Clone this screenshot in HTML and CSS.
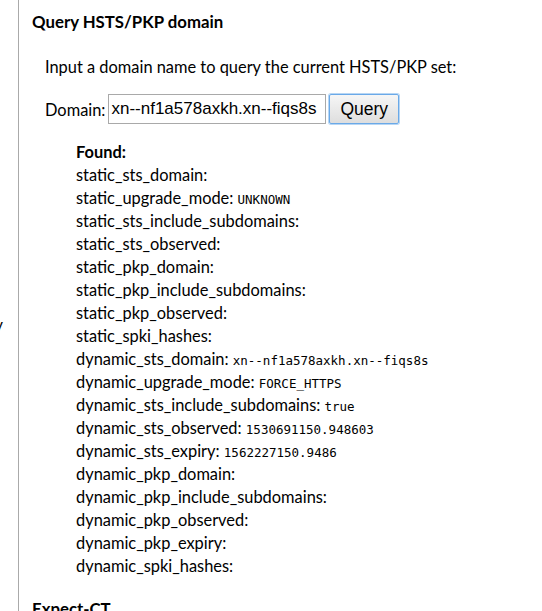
FILE: index.html
```html
<!DOCTYPE html>
<html lang="en">
<head>
	<title>HSTS</title>
	<link rel="stylesheet" href="styles.css">
</head>

<body>
	<div id="page">
		<div id="sidebar">
			<div class="nav-item">Proxy</div>
		</div>

		<div id="content">
			<h2>Query HSTS/PKP domain</h2>
			<div class="section">
				<p>Input a domain name to query the current HSTS/PKP set:</p>
				<form id="query-form">
					<label for="domain">Domain:</label>
					<input id="domain" type="text" value="xn--nf1a578axkh.xn--fiqs8s">
					<button type="submit">Query</button>
				</form>

				<div id="query-output">
					<div class="found">Found:</div>
					<div>static_sts_domain: </div>
					<div>static_upgrade_mode: <tt>UNKNOWN</tt></div>
					<div>static_sts_include_subdomains: </div>
					<div>static_sts_observed: </div>
					<div>static_pkp_domain: </div>
					<div>static_pkp_include_subdomains: </div>
					<div>static_pkp_observed: </div>
					<div>static_spki_hashes: </div>
					<div>dynamic_sts_domain: <tt>xn--nf1a578axkh.xn--fiqs8s</tt></div>
					<div>dynamic_upgrade_mode: <tt>FORCE_HTTPS</tt></div>
					<div>dynamic_sts_include_subdomains: <tt>true</tt></div>
					<div>dynamic_sts_observed: <tt>1530691150.948603</tt></div>
					<div>dynamic_sts_expiry: <tt>1562227150.9486</tt></div>
					<div>dynamic_pkp_domain: </div>
					<div>dynamic_pkp_include_subdomains: </div>
					<div>dynamic_pkp_observed: </div>
					<div>dynamic_pkp_expiry: </div>
					<div>dynamic_spki_hashes: </div>
				</div>
			</div>

			<h2>Expect-CT</h2>
		</div>
	</div>
</body>
</html>
```

FILE: styles.css
```css
body {
	margin: 0;
	padding: 0;
	font-family: 'Lato', 'Noto Sans', sans-serif;
	font-size: 16.4px;
	color: #000;
	background: #fff;
}

#page {
	display: flex;
	min-height: 611px;
}

#sidebar {
	width: 19px;
	flex-shrink: 0;
	border-right: 1px solid #aaa;
	overflow: hidden;
	direction: rtl;
	padding-top: 313px;
	box-sizing: border-box;
}

.nav-item {
	white-space: nowrap;
	padding-right: 15px;
	line-height: 23px;
}

#content {
	padding-left: 13px;
	padding-top: 12px;
}

h2 {
	margin: 0;
	font-size: 16.8px;
	font-weight: bold;
	line-height: 20px;
}

.section {
	padding-left: 13px;
}

.section p {
	margin: 23px 0 0 0;
	line-height: 24px;
}

#query-form {
	display: flex;
	align-items: center;
	margin-top: 15px;
}

label {
	margin-right: 3px;
}

input {
	font-family: 'Liberation Sans', Arial, sans-serif;
	font-size: 17px;
	width: 218px;
	height: 30px;
	box-sizing: border-box;
	padding: 1px 2px;
	border: 1px solid #a9a9a9;
}

button {
	font-family: 'Liberation Sans', Arial, sans-serif;
	font-size: 17.5px;
	margin-left: 3px;
	height: 30px;
	padding: 0 10px;
	border: 1px solid #6aa9e8;
	border-radius: 2px;
	background: linear-gradient(#f6f6f6, #dedede);
	box-shadow: 0 0 0 1px #b7d6f4;
}

#query-output {
	padding-left: 31px;
	margin-top: 16px;
	line-height: 23px;
	margin-bottom: 22px;
}

.found {
	font-weight: bold;
}

/* monospace values must not stretch the row height */
tt {
	font-family: 'DejaVu Sans Mono', monospace;
	font-size: 12.5px;
	line-height: 0;
}
```
